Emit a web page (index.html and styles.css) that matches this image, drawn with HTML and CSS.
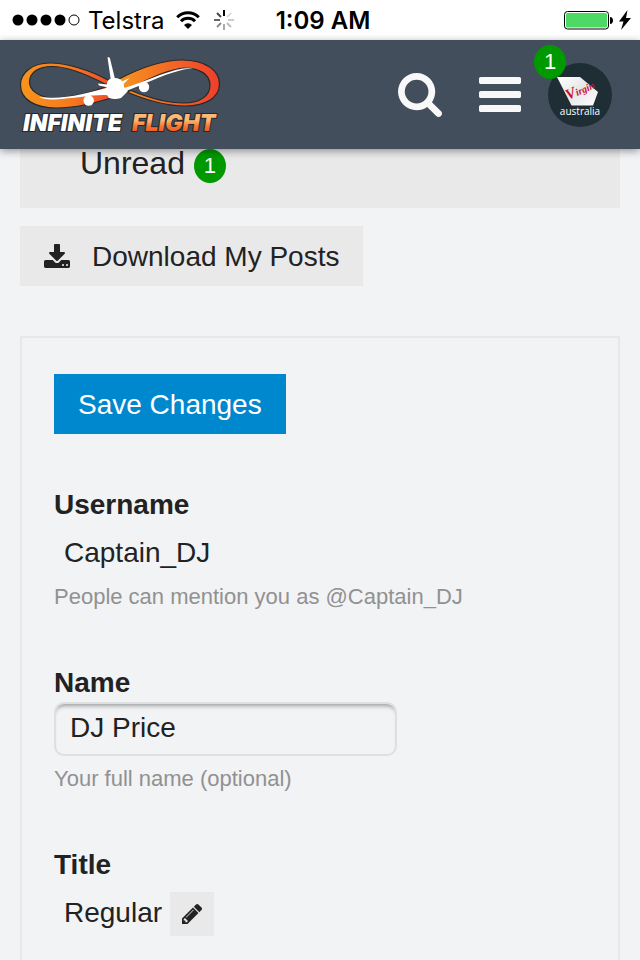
FILE: index.html
```html
<!DOCTYPE html>
<html lang="en">
<head>
    <meta charset="UTF-8">
    <meta name="viewport" content="width=device-width, initial-scale=1.0">
    <title>Preferences - Infinite Flight</title>
    <link rel="stylesheet" href="styles.css">
</head>
<body>

    <div class="status-bar">
        <div class="status-left">
            <svg class="signal" viewBox="0 0 68 12" width="68" height="12">
                <circle cx="6" cy="6" r="5.5"/>
                <circle cx="20" cy="6" r="5.5"/>
                <circle cx="34" cy="6" r="5.5"/>
                <circle cx="48" cy="6" r="5.5"/>
                <circle cx="62" cy="6" r="5" fill="none" stroke="#000"/>
            </svg>
            <span class="carrier">Telstra</span>
            <svg class="wifi" viewBox="0 0 24 18" width="24" height="18">
                <path d="M1.2 6.2a15.4 15.4 0 0 1 21.6 0M5 10.2a10 10 0 0 1 14 0" fill="none" stroke="#000" stroke-width="3"/>
                <path d="M12 18l-4-4a5.6 5.6 0 0 1 8 0z"/>
            </svg>
            <svg class="loader" viewBox="-10 -10 20 20" width="20" height="20" stroke-width="2">
                <path d="M0-4v-6" stroke="#000"/>
                <path d="M3-3l4-4" stroke="#ddd"/>
                <path d="M4 0h6" stroke="#ccc"/>
                <path d="M3 3l4 4" stroke="#bbb"/>
                <path d="M0 4v6" stroke="#aaa"/>
                <path d="M-3 3l-4 4" stroke="#888"/>
                <path d="M-4 0h-6" stroke="#666"/>
                <path d="M-3-3l-4-4" stroke="#444"/>
            </svg>
        </div>
        <span class="clock">1:09 AM</span>
        <div class="status-right">
            <svg viewBox="0 0 49 20" width="49" height="20">
                <rect x="0.5" y="1.5" width="44" height="17.5" rx="3" fill="#fff" stroke="#000"/>
                <rect x="2" y="3" width="41" height="14.5" rx="1.5" fill="#4cd964"/>
                <path d="M46 7c4 0 4 7 0 7z"/>
            </svg>
            <svg viewBox="0 0 12 20" width="12" height="20">
                <path d="M8.500 0L0 11.500h4.500L2 20 12 8H7z"/>
            </svg>
        </div>
    </div>

    <header class="site-header">
        <a href="#" class="logo" aria-label="Infinite Flight">
            <svg viewBox="20 55 200 82" width="200" height="82">
                <defs>
                    <linearGradient id="left-loop" x1="0" x2="1" y1="0" y2="0">
                        <stop offset="0" stop-color="#f7941e"/>
                        <stop offset="0.5" stop-color="#f47b20"/>
                        <stop offset="1" stop-color="#f0452a"/>
                    </linearGradient>
                    <linearGradient id="right-loop" x1="0" x2="1" y1="0" y2="0">
                        <stop offset="0" stop-color="#f7941e"/>
                        <stop offset="1" stop-color="#ee3f2b"/>
                    </linearGradient>
                    <linearGradient id="flight" x1="0" x2="0" y1="0" y2="1">
                        <stop offset="0.400" stop-color="#fbb877"/>
                        <stop offset="0.600" stop-color="#f47b36"/>
                        <stop offset="0.800" stop-color="#f15a22"/>
                    </linearGradient>
                </defs>
                <g fill-rule="evenodd" stroke="#26282b" stroke-width="1.200">
                    <path fill="url(#left-loop)" d="M110 82C88 70 65 64 50 64C32 64 20.500 74 20.500 86C20.500 101 36 109 56 109C78 109 98 103 118 97L108 87C90 94 68 99 52 99C38 98 29.500 91 29.500 83C29.500 73 39 67.500 52 67.500C67 67.500 88 76 106 85.500Z"/>
                    <path fill="url(#right-loop)" d="M119 80C144 67 164 61 182 61C206 61 219.500 72 219.500 85C219.500 99 205 107 185 107C164 107 146 101 127 93L131 91.500C149 99 167 104 184 104C200 104 210 97 210 86C210 75 199 69 184 69C168 70 147 81 124 92Z"/>
                </g>
                <g fill="#fff">
                    <path d="M39 98C64 101 88 94 110 88L114 97C99 94 77 99.500 55 100.500C48 100.500 43 100 39 98Z"/>
                    <path d="M120 94C147 85 168 72 193 69C175 67.500 150 81 121 90Z"/>
                    <path d="M107.500 58.500q1.500-1.500 2.500 1L115 80l-4 2z"/>
                    <path d="M98 84.500l10 1v3l-9-2zM121 83l8.500-4-6 6z"/>
                    <path d="M107 88C106 82 109 79 115 79C121 79 124 83 124 88L128 92L121 99Q115 101 109 99L105 93Z"/>
                    <circle cx="88.700" cy="101.500" r="5.200"/>
                    <circle cx="144" cy="88" r="5.200"/>
                </g>
                <text class="logo-text" x="23" y="132" fill="#fff">INFINITE</text>
                <text class="logo-text" x="132" y="132" fill="url(#flight)">FLIGHT</text>
            </svg>
        </a>
        <nav class="header-icons">
            <button type="button" class="icon-btn search-btn" aria-label="Search">
                <svg viewBox="0 128 1664 1664" width="44" height="44"><path d="M1152 832q0-185-131.500-316.500t-316.500-131.500-316.500 131.500-131.500 316.500 131.500 316.500 316.500 131.500 316.500-131.500 131.500-316.500zm512 832q0 52-38 90t-90 38q-54 0-90-38l-343-342q-179 124-399 124-143 0-273.500-55.500t-225-150-150-225-55.500-273.500 55.500-273.500 150-225 225-150 273.500-55.500 273.500 55.500 225 150 150 225 55.500 273.500q0 220-124 399l343 343q37 37 37 90z"/></svg>
            </button>
            <button type="button" class="icon-btn" aria-label="Menu">
                <svg viewBox="128 256 1536 1280" width="42" height="35"><path d="M1664 1344v128q0 26-19 45t-45 19h-1408q-26 0-45-19t-19-45v-128q0-26 19-45t45-19h1408q26 0 45 19t19 45zm0-512v128q0 26-19 45t-45 19h-1408q-26 0-45-19t-19-45v-128q0-26 19-45t45-19h1408q26 0 45 19t19 45zm0-512v128q0 26-19 45t-45 19h-1408q-26 0-45-19t-19-45v-128q0-26 19-45t45-19h1408q26 0 45 19t19 45z"/></svg>
            </button>
            <button type="button" class="icon-btn avatar" aria-label="Captain_DJ">
                <svg viewBox="0 0 64 64" width="64" height="64">
                    <defs>
                        <linearGradient id="fin" x1="0" x2="1" y1="0" y2="1">
                            <stop offset="0" stop-color="#fff"/>
                            <stop offset="0.500" stop-color="#e6e6e6"/>
                            <stop offset="1" stop-color="#fff"/>
                        </linearGradient>
                    </defs>
                    <circle cx="32" cy="32" r="32" fill="#1f2e35"/>
                    <path d="M9 14h23l18 15-5 13.500H23.500z" fill="url(#fin)"/>
                    <text class="avatar-script" x="20" y="37" transform="rotate(-24 20 37)"><tspan class="avatar-initial">V</tspan>irgin</text>
                    <text class="avatar-name" x="32" y="52">australia</text>
                </svg>
                <span class="badge avatar-badge">1</span>
            </button>
        </nav>
    </header>

    <main class="content">
        <a href="#" class="unread">
            <span>Unread</span>
            <span class="badge">1</span>
        </a>

        <button type="button" class="btn download">
            <svg viewBox="64 0 1664 1536" width="26" height="24"><path d="M1344 1344q0-26-19-45t-45-19-45 19-19 45 19 45 45 19 45-19 19-45zm256 0q0-26-19-45t-45-19-45 19-19 45 19 45 45 19 45-19 19-45zm128-224v320q0 40-28 68t-68 28h-1472q-40 0-68-28t-28-68v-320q0-40 28-68t68-28h465l135 136q58 56 136 56t136-56l136-136h464q40 0 68 28t28 68zm-325-569q17 41-14 70l-448 448q-18 19-45 19t-45-19l-448-448q-31-29-14-70 17-39 59-39h256v-448q0-26 19-45t45-19h256q26 0 45 19t19 45v448h256q42 0 59 39z"/></svg>
            <span>Download My Posts</span>
        </button>

        <form class="preferences">
            <button type="submit" class="btn btn-primary"><span>Save Changes</span></button>

            <div class="field">
                <div class="field-label">Username</div>
                <div class="field-row">
                    <span class="value">Captain_DJ</span>
                </div>
                <div class="hint">People can mention you as @Captain_DJ</div>
            </div>

            <div class="field">
                <label class="field-label" for="name">Name</label>
                <input type="text" id="name" name="name" class="text-input" value="DJ Price">
                <div class="hint">Your full name (optional)</div>
            </div>

            <div class="field">
                <div class="field-label">Title</div>
                <div class="field-row">
                    <span class="value">Regular</span>
                    <button type="button" class="edit-btn" aria-label="Edit title">
                        <svg viewBox="128 149 1515 1515" width="20" height="20"><path d="M491 1536l91-91-235-235-91 91v107h128v128h107zm523-928q0-22-22-22-10 0-17 7l-542 542q-7 7-7 17 0 22 22 22 10 0 17-7l542-542q7-7 7-17zm-54-192l416 416-832 832h-416v-416zm683 96q0 53-37 90l-166 166-416-416 166-165q36-38 90-38 53 0 91 38l235 234q37 39 37 91z"/></svg>
                    </button>
                </div>
            </div>
        </form>
    </main>

</body>
</html>
```

FILE: styles.css
```css
* {
    box-sizing: border-box;
}
body {
    margin: 0;
    height: 100vh;
    display: flex;
    flex-direction: column;
    overflow: hidden;
    background-color: #f1f3f5;
    color: #222222;
    font-family: "Liberation Sans", Arial, sans-serif;
    font-size: 28px;
}
button, input {
    font: inherit;
    color: inherit;
    margin: 0;
}
button {
    border: none;
    cursor: pointer;
}
svg {
    display: block;
    flex: none;
}

/* Status bar */
.status-bar {
    flex: none;
    height: 40px;
    padding: 0 9px 0 12px;
    display: grid;
    grid-template-columns: 1fr auto 1fr;
    align-items: center;
    background-color: white;
    color: black;
    font-family: Inter, sans-serif;
    font-size: 24px;
}
.status-left, .status-right {
    display: flex;
    align-items: center;
}
.carrier {
    margin: 0 12px 0 8px;
}
.loader {
    margin-left: 14px;
}
.clock {
    padding-left: 3px;
    font-weight: 600;
}
.status-right {
    justify-content: flex-end;
    gap: 6px;
}

/* Header */
.site-header {
    flex: none;
    height: 109px;
    padding: 0 28px 0 20px;
    display: flex;
    align-items: center;
    justify-content: space-between;
    background-color: #424e5b;
    box-shadow: 0 2px 8px rgba(0,0,0,0.4);
    position: relative;
    z-index: 1;
}
.logo-text {
    font-family: Inter, sans-serif;
    font-size: 23px;
    font-weight: 900;
    font-style: italic;
    stroke: #26282b;
    stroke-width: 2px;
    paint-order: stroke;
}
.header-icons {
    display: flex;
    align-items: center;
    gap: 27px;
}
.icon-btn {
    padding: 0;
    background: none;
    fill: #f8f8f9;
}
.search-btn {
    margin-right: 10px;
}
.avatar {
    position: relative;
}
.avatar-script {
    font-family: "Liberation Serif", serif;
    font-size: 10px;
    font-style: italic;
    font-weight: bold;
    fill: #c8102e;
}
.avatar-initial {
    font-size: 15px;
}
.avatar-name {
    font-family: "Open Sans", sans-serif;
    font-size: 10px;
    fill: white;
    text-anchor: middle;
}
.badge {
    width: 32px;
    height: 34px;
    line-height: 34px;
    border-radius: 50%;
    background-color: #009900;
    color: white;
    font-size: 22px;
    text-align: center;
}
.avatar-badge {
    position: absolute;
    top: -18px;
    left: -14px;
}

/* Content */
.content {
    flex: 1;
    min-height: 0;
    padding: 0 20px;
    display: flex;
    flex-direction: column;
    align-items: flex-start;
}
.unread {
    align-self: stretch;
    flex: none;
    padding: 0 60px 25px;
    margin-bottom: 18px;
    display: flex;
    gap: 9px;
    background-color: #e9e9e9;
    color: #222222;
    font-size: 32px;
    line-height: 29px;
    text-decoration: none;
}
.btn {
    flex: none;
    height: 60px;
    padding: 0 24px;
    display: flex;
    align-items: center;
    background-color: #e9e9e9;
}
.btn span {
    padding-top: 2px;
}
.download {
    gap: 22px;
    margin-bottom: 50px;
    fill: #222222;
}
.btn-primary {
    margin-bottom: 53px;
    background-color: #0088cf;
    color: white;
}
.preferences {
    align-self: stretch;
    flex: none;
    padding: 36px 32px 0;
    border: 2px solid #e6e8e9;
}
.field {
    margin-bottom: 54px;
}
.field-label {
    display: block;
    font-weight: bold;
    line-height: 36px;
}
.field-row {
    display: flex;
    gap: 8px;
    margin-top: 8px;
    padding-left: 10px;
}
.value {
    line-height: 44px;
}
.text-input {
    display: block;
    width: 343px;
    max-width: 100%;
    height: 54px;
    margin: 1px 0 9px;
    padding: 0 14px 2px;
    border: 2px solid #dddfe1;
    border-radius: 10px;
    background-color: transparent;
    box-shadow: inset 0 5px 4px -3px rgba(0,0,0,0.35);
}
.hint {
    margin-top: 8px;
    color: #919191;
    font-size: 22px;
    line-height: 28px;
}
.edit-btn {
    width: 44px;
    height: 44px;
    margin-top: 1px;
    padding: 0;
    display: flex;
    align-items: center;
    justify-content: center;
    background-color: #e9e9e9;
    fill: #222222;
}
```
